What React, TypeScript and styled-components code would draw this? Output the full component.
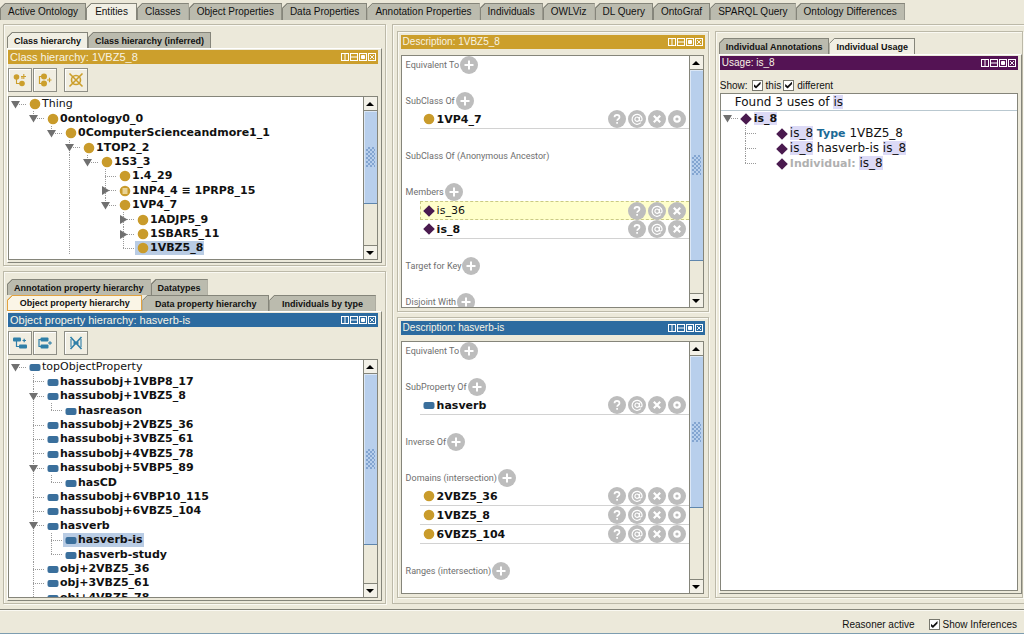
import React from "react";
import styled, { createGlobalStyle, css } from "styled-components";

const C = {
  bg: "#ece9da",
  tab: "#bbbbae",
  edge: "#85857a",
  etch: "#bcb9a8",
  gold: "#cc9f2c",
  blue: "#2c6ba0",
  purple: "#541354",
  thumb: "#b8cfec",
  select: "#b9cce4",
  mark: "#dcdaf6",
  guide: "#9a9a9a",
};

const GlobalStyle = createGlobalStyle`
  *, *::before, *::after { box-sizing: border-box; }
  body { margin: 0; background: ${C.bg}; color: #111; font-family: "Liberation Sans", Arial, sans-serif; font-size: 10px; }
  button, input { font: inherit; color: inherit; margin: 0; }
  button { padding: 0; cursor: pointer; }
  ul { list-style: none; margin: 0; padding: 0; }
  svg { display: block; flex: none; }
`;

const Page = styled.div`
  display: flex;
  flex-direction: column;
  height: 100vh;
  overflow: hidden;
`;

/* ---------- tabs ---------- */

const TabStrip = styled.div<{ $main?: boolean; $stretch?: boolean }>`
  display: flex;
  flex: none;
  padding-top: ${(p) => (p.$main ? 3 : 0)}px;
  ${(p) => p.$stretch && css`padding-right: 6px; > * { flex: 1 1 auto; }`}
`;

const Tab = styled.button<{ $active?: boolean; $focus?: boolean; $small?: boolean }>`
  height: ${(p) => (p.$small ? 16 : 17)}px;
  min-width: ${(p) => (p.$small ? 0 : 51)}px;
  padding: 0 ${(p) => (p.$small ? 6 : 7)}px;
  border: 1px solid ${(p) => (p.$focus ? "#e2a240" : C.edge)};
  border-bottom-width: ${(p) => (p.$focus ? 1 : 0)}px;
  clip-path: polygon(5px 0, 100% 0, 100% 100%, 0 100%, 0 5px);
  background: ${(p) => {
    const fill = p.$focus ? "#faf5e6" : p.$active ? "#f1efe4" : C.tab;
    return `linear-gradient(135deg, ${p.$focus ? "#e2a240" : C.edge} 3px, ${fill} 3px)`;
  }};
  font-size: ${(p) => (p.$small ? 9 : 10)}px;
  font-weight: ${(p) => (p.$small ? 700 : 400)};
  line-height: 14px;
  white-space: nowrap;
`;

/* ---------- frames ---------- */

const Workspace = styled.main`
  flex: 1;
  min-height: 0;
  display: grid;
  grid-template-columns: 383fr 633fr;
  gap: 6px;
  padding: 4px 0 5px 3px;
`;

const LeftColumn = styled.div`
  display: grid;
  grid-template-rows: 242fr 333fr;
  gap: 5px;
  min-height: 0;
  min-width: 0;
`;

const frame = css`
  border: 1px solid ${C.etch};
  box-shadow: inset 1px 1px 0 #faf9f2, 1px 1px 0 #faf9f2;
  min-height: 0;
  min-width: 0;
  display: flex;
  flex-direction: column;
`;

const LeftFrame = styled.section`
  ${frame}
  padding: 7px 3px 2px;
`;

const RightArea = styled.div`
  border: 1px solid ${C.etch};
  border-right: 0;
  box-shadow: inset 1px 1px 0 #faf9f2;
  min-height: 0;
  min-width: 0;
  display: grid;
  grid-template-columns: 312fr 308fr;
  gap: 6px;
  padding: 6px 1px 5px 4px;
`;

const MiddleColumn = styled.div`
  display: grid;
  grid-template-rows: 1fr 1fr;
  gap: 5px;
  min-height: 0;
  min-width: 0;
`;

const MiddleFrame = styled.section`
  ${frame}
  padding: 3px;
`;

const UsageFrame = styled.section`
  ${frame}
  padding: 6px 0 3px 3px;
`;

const TabBody = styled.div`
  flex: 1;
  min-height: 0;
  display: flex;
  flex-direction: column;
  padding: 1px 3px 2px 0;
  border: 1px solid;
  border-color: #fff ${C.edge} ${C.edge} #fff;
`;

/* ---------- title bar ---------- */

const TitleBar = styled.header<{ $color: string; $large?: boolean }>`
  flex: none;
  display: flex;
  align-items: center;
  justify-content: space-between;
  height: 14px;
  padding: 0 2px;
  background: ${(p) => p.$color};
  color: #f8f4e4;
  font-size: ${(p) => (p.$large ? 11 : 10)}px;
  line-height: 14px;
  white-space: nowrap;
`;

const WindowButtons = styled.span`
  display: flex;
  gap: 1px;
`;

const BareButton = styled.button`
  display: block;
  border: 0;
  background: none;
`;

const WINDOW_ICONS: [string, React.ReactNode][] = [
  ["Split vertically", <path key="a" d="M4 0v8" />],
  ["Split horizontally", <path key="a" d="M0 4h8" />],
  ["Float", <path key="a" d="M2.5 2.5h3v3h-3z" fill="#fff" />],
  ["Close", <path key="a" d="M2 2l4 4M6 2l-4 4" strokeWidth="0.9" />],
];

function Title({ color, text, large }: { color: string; text: string; large?: boolean }) {
  return (
    <TitleBar $color={color} $large={large}>
      <span>{text}</span>
      <WindowButtons>
        {WINDOW_ICONS.map(([label, shape]) => (
          <BareButton key={label} aria-label={label}>
            <svg width="8" height="8" viewBox="0 0 8 8" fill="none" stroke="#fff">
              <rect x="0.5" y="0.5" width="7" height="7" />
              {shape}
            </svg>
          </BareButton>
        ))}
      </WindowButtons>
    </TitleBar>
  );
}

/* ---------- toolbar ---------- */

const Toolbar = styled.div`
  flex: none;
  display: flex;
  gap: 1px;
  padding: 4px 0;
`;

const ToolButton = styled.button<{ $apart?: boolean }>`
  display: flex;
  align-items: center;
  justify-content: center;
  width: 24px;
  height: 24px;
  margin-left: ${(p) => (p.$apart ? 6 : 0)}px;
  border: 1px solid #8f8f86;
  background: #f1eee2;
  box-shadow: inset 1px 1px 0 #fff;
`;

const G = C.gold;
const B = "#2f7fa8";

const classTools = [
  <svg key="0" width="16" height="16" viewBox="0 0 16 16" fill={G}>
    <circle cx="4.500" cy="5" r="2.800" />
    <circle cx="10" cy="11.500" r="2.800" />
    <path d="M4.500 7v4.500h4M10 7V4.500M9 4.500h5M11.800 2v5" fill="none" stroke={G} strokeWidth="1.100" />
  </svg>,
  <svg key="1" width="16" height="16" viewBox="0 0 16 16" fill={G}>
    <circle cx="7" cy="4.500" r="3" />
    <circle cx="7" cy="11.500" r="3" />
    <path d="M5 4.500H2.500v7H5M10 8h4.500M12.500 5.800v4.400" fill="none" stroke={G} strokeWidth="1.200" />
  </svg>,
  <svg key="2" width="16" height="16" viewBox="0 0 16 16" fill="none" stroke={G} strokeWidth="1.600">
    <circle cx="8" cy="8" r="4.500" />
    <path d="M1.500 1.500l13 13M14.500 1.500l-13 13" />
  </svg>,
];

const propertyTools = [
  <svg key="0" width="16" height="16" viewBox="0 0 16 16" fill={B}>
    <rect x="1" y="2.500" width="8" height="4" rx="1" />
    <rect x="7" y="9.500" width="8" height="4" rx="1" />
    <path d="M4.500 6v5.500H7M10.500 5.500h3.500M12.200 3.800v3.500" fill="none" stroke={B} strokeWidth="1.200" />
  </svg>,
  <svg key="1" width="16" height="16" viewBox="0 0 16 16" fill={B}>
    <rect x="3.500" y="2.500" width="8" height="4" rx="1" />
    <rect x="3.500" y="9.500" width="8" height="4" rx="1" />
    <path d="M4 4.500H2v7h2M11 8h4M13 6.200v3.500" fill="none" stroke={B} strokeWidth="1.200" />
  </svg>,
  <svg key="2" width="16" height="16" viewBox="0 0 16 16" fill="none" stroke={B} strokeWidth="1.600">
    <path d="M2.500 2l11 12M13.500 2l-11 12" />
    <path d="M3 4v8M13 4v8" strokeWidth="1.100" />
    <path d="M5.500 8h5" strokeWidth="2.500" />
  </svg>,
];

function Tools({ icons, labels }: { icons: React.ReactNode[]; labels: string[] }) {
  return (
    <Toolbar>
      {icons.map((icon, i) => (
        <ToolButton key={labels[i]} aria-label={labels[i]} $apart={i === 2}>
          {icon}
        </ToolButton>
      ))}
    </Toolbar>
  );
}

/* ---------- scrolling box ---------- */

const Box = styled.div`
  flex: 1;
  min-height: 0;
  display: flex;
  border: 1px solid ${C.edge};
  background: #fff;
`;

const BoxContent = styled.div`
  flex: 1;
  min-width: 0;
  overflow: hidden;
`;

const Track = styled.div`
  flex: none;
  display: flex;
  flex-direction: column;
  width: 14px;
  border-left: 1px solid ${C.edge};
  background: ${C.bg};
`;

const ArrowButton = styled.button`
  display: flex;
  align-items: center;
  justify-content: center;
  flex: none;
  height: 14px;
  border: 0;
  background: #f3f1e8;
  &:first-child { border-bottom: 1px solid ${C.edge}; }
  &:last-child { border-top: 1px solid ${C.edge}; }
`;

const Thumb = styled.div<{ $share: number }>`
  flex: ${(p) => p.$share} 1 0;
  display: flex;
  align-items: center;
  justify-content: center;
  border-bottom: 1px solid #5f86ad;
  background: ${C.thumb};
  box-shadow: inset 1px 1px 0 #dbe7f6;
`;

const Spare = styled.div<{ $share: number }>`
  flex: ${(p) => p.$share} 1 0;
`;

const Grip = styled.span`
  width: 9px;
  height: 20px;
  background:
    conic-gradient(#6d94c6 25%, transparent 0) 0 0 / 4px 4px,
    conic-gradient(#6d94c6 25%, transparent 0) 2px 2px / 4px 4px;
  opacity: 0.7;
`;

function Scroll({ thumb, spare, children }: { thumb: number; spare: number; children: React.ReactNode }) {
  return (
    <Box>
      <BoxContent>{children}</BoxContent>
      <Track>
        <ArrowButton aria-label="Scroll up">
          <svg width="8" height="4" viewBox="0 0 8 4"><path d="M4 0l4 4H0z" /></svg>
        </ArrowButton>
        <Thumb $share={thumb}><Grip /></Thumb>
        <Spare $share={spare} />
        <ArrowButton aria-label="Scroll down">
          <svg width="8" height="4" viewBox="0 0 8 4"><path d="M0 0h8L4 4z" /></svg>
        </ArrowButton>
      </Track>
    </Box>
  );
}

/* ---------- entity icons ---------- */

type Kind = "class" | "defined" | "property" | "individual";

const IconSlot = styled.span`
  display: flex;
  justify-content: center;
  flex: none;
  width: 15px;
`;

function EntityIcon({ kind }: { kind: Kind }) {
  return (
    <IconSlot>
      <svg width="12" height="12" viewBox="0 0 12 12">
        {kind === "property" && <rect x="0.500" y="3" width="11" height="7" rx="2" fill="#3a6f9c" />}
        {kind === "individual" && <path d="M6 0.200L11.800 6 6 11.800 0.200 6z" fill="#4a1a4f" />}
        {(kind === "class" || kind === "defined") && <circle cx="6" cy="6" r="5.300" fill="#c99b2b" />}
        {kind === "defined" && <path d="M3.500 4h5M3.500 6h5M3.500 8h5" stroke="#f3e6b8" strokeWidth="1.300" />}
      </svg>
    </IconSlot>
  );
}

/* ---------- tree ---------- */

type Line = "none" | "through" | "tee" | "elbow" | "stub";

const TreeList = styled.ul`
  display: grid;
  grid-auto-rows: 14px 15px 14px 15px 14px;
  font-family: "DejaVu Sans", Verdana, sans-serif;
  font-size: 11px;
`;

const TreeRow = styled.li`
  display: flex;
  align-items: center;
  white-space: nowrap;
`;

const dotsDown = `repeating-linear-gradient(to bottom, ${C.guide} 0 1px, transparent 1px 2px)`;
const dotsAcross = `repeating-linear-gradient(to right, ${C.guide} 0 1px, transparent 1px 2px)`;

const Guide = styled.span<{ $line: Line }>`
  flex: none;
  display: flex;
  align-items: center;
  align-self: stretch;
  width: 18px;
  padding-left: 2px;
  background-repeat: no-repeat;
  background-position: 6px 0, 6px 7px;
  background-image: ${(p) => (p.$line === "none" ? "none" : `${dotsDown}, ${dotsAcross}`)};
  background-size: ${(p) =>
    ({
      none: "0 0, 0 0",
      through: "1px 100%, 0 0",
      tee: "1px 100%, 12px 1px",
      elbow: "1px 8px, 12px 1px",
      stub: "0 0, 12px 1px",
    })[p.$line]};
`;

const NodeLabel = styled.span<{ $bold: boolean; $selected?: boolean }>`
  display: flex;
  align-items: center;
  align-self: stretch;
  padding-right: 1px;
  font-weight: ${(p) => (p.$bold ? 700 : 400)};
  line-height: 14px;
  background: ${(p) => (p.$selected ? C.select : "transparent")};
`;

function Toggle({ open }: { open: boolean }) {
  return (
    <BareButton aria-label={open ? "Collapse" : "Expand"}>
      <svg width="9" height="9" viewBox="0 0 9 9" fill="#707070">
        <path d={open ? "M0 1h9L4.500 8.500z" : "M1 0l7.500 4.500L1 9z"} />
      </svg>
    </BareButton>
  );
}

interface Node {
  name: string;
  lines: string; // one letter per indent column: . none, | through, + tee, L elbow, - stub
  open?: boolean;
  kind?: Kind;
  plain?: boolean;
  selected?: boolean;
}

const LINE: Record<string, Line> = { ".": "none", "|": "through", "+": "tee", L: "elbow", "-": "stub" };

function Tree({ nodes, kind, label }: { nodes: Node[]; kind: Kind; label: string }) {
  return (
    <TreeList role="tree" aria-label={label}>
      {nodes.map((n) => (
        <TreeRow key={n.name} role="treeitem" aria-selected={!!n.selected}>
          {n.lines.split("").map((ch, i) => (
            <Guide key={i} $line={LINE[ch]}>
              {i === n.lines.length - 1 && n.open !== undefined && <Toggle open={n.open} />}
            </Guide>
          ))}
          <NodeLabel $bold={!n.plain} $selected={n.selected}>
            <EntityIcon kind={n.kind ?? kind} />
            {n.name}
          </NodeLabel>
        </TreeRow>
      ))}
    </TreeList>
  );
}

const classNodes: Node[] = [
  { name: "Thing", lines: "-", open: true, plain: true },
  { name: "0ontology0_0", lines: ".L", open: true },
  { name: "0ComputerScienceandmore1_1", lines: "..L", open: true },
  { name: "1TOP2_2", lines: "...+", open: true },
  { name: "1S3_3", lines: "...|L", open: true },
  { name: "1.4_29", lines: "...|.+" },
  { name: "1NP4_4 ≡ 1PRP8_15", lines: "...|.+", open: false, kind: "defined" },
  { name: "1VP4_7", lines: "...|.L", open: true },
  { name: "1ADJP5_9", lines: "...|..+", open: false },
  { name: "1SBAR5_11", lines: "...|..+", open: false },
  { name: "1VBZ5_8", lines: "...|..L", selected: true },
];

const propertyNodes: Node[] = [
  { name: "topObjectProperty", lines: "-", open: true, plain: true },
  { name: "hassubobj+1VBP8_17", lines: ".+" },
  { name: "hassubobj+1VBZ5_8", lines: ".+", open: true },
  { name: "hasreason", lines: ".|L" },
  { name: "hassubobj+2VBZ5_36", lines: ".+" },
  { name: "hassubobj+3VBZ5_61", lines: ".+" },
  { name: "hassubobj+4VBZ5_78", lines: ".+" },
  { name: "hassubobj+5VBP5_89", lines: ".+", open: true },
  { name: "hasCD", lines: ".|L" },
  { name: "hassubobj+6VBP10_115", lines: ".+" },
  { name: "hassubobj+6VBZ5_104", lines: ".+" },
  { name: "hasverb", lines: ".+", open: true },
  { name: "hasverb-is", lines: ".|+", selected: true },
  { name: "hasverb-study", lines: ".|L" },
  { name: "obj+2VBZ5_36", lines: ".+" },
  { name: "obj+3VBZ5_61", lines: ".+" },
  { name: "obj+4VBZ5_78", lines: ".+" },
];

/* ---------- description panels ---------- */

const Sections = styled.div`
  display: flex;
  flex-direction: column;
  gap: 18px;
`;

const SectionHead = styled.h3`
  display: flex;
  align-items: center;
  gap: 1px;
  height: 18px;
  margin: 0;
  padding-left: 4px;
  color: #6e6e6e;
  font-family: Roboto, "Liberation Sans", sans-serif;
  font-size: 9px;
  font-weight: 400;
  line-height: 18px;
  white-space: nowrap;
`;

const Item = styled.li<{ $inferred?: boolean }>`
  display: flex;
  align-items: center;
  justify-content: space-between;
  height: 19px;
  margin-left: 18px;
  padding-right: 3px;
  padding-left: ${(p) => (p.$inferred ? 1 : 2)}px;
  border: 0 solid #d2d2d2;
  border-bottom-width: 1px;
  font-family: "DejaVu Sans", Verdana, sans-serif;
  font-size: 11px;
  font-weight: 700;
  ${(p) =>
    p.$inferred &&
    css`
      border: 1px dashed #c9c985;
      border-right: 0;
      background: #ffffcb;
      font-weight: 400;
    `}
`;

const ItemName = styled.span`
  display: flex;
  align-items: center;
`;

const Actions = styled.span`
  display: flex;
  gap: 2px;
`;

const actionShapes: Record<string, React.ReactNode> = {
  Add: <path d="M9 4.500v9M4.500 9h9" strokeWidth="2" />,
  Explain: (
    <path d="M6.500 7.300c0-3.200 5-3.200 5 0 0 1.700-2.400 1.700-2.400 3.500M9.100 12v1.800" strokeWidth="1.700" />
  ),
  Annotate: (
    <path
      d="M12.800 12.700a5 5 0 1 1 1.300-3.700c0 2.600-2.900 2.600-2.700.3l.3-2.500M11.300 9a2.200 2.200 0 1 1-4.300-.4 2.200 2.200 0 0 1 4.300.4"
      strokeWidth="1.200"
    />
  ),
  Remove: <path d="M5.800 5.800l6.400 6.400M12.200 5.800l-6.400 6.400" strokeWidth="2.200" />,
  Edit: <circle cx="9" cy="9" r="2.700" strokeWidth="2.200" />,
};

function RoundButton({ action }: { action: string }) {
  return (
    <BareButton aria-label={action}>
      <svg width="18" height="18" viewBox="0 0 18 18" fill="none" stroke="#fff">
        <circle cx="9" cy="9" r="9" fill="#bdbdbd" stroke="none" />
        {actionShapes[action]}
      </svg>
    </BareButton>
  );
}

interface Section {
  head: string;
  fixed?: boolean;
  items?: { name: string; kind: Kind; inferred?: boolean }[];
}

const classSections: Section[] = [
  { head: "Equivalent To" },
  { head: "SubClass Of", items: [{ name: "1VP4_7", kind: "class" }] },
  { head: "SubClass Of (Anonymous Ancestor)", fixed: true },
  {
    head: "Members",
    items: [
      { name: "is_36", kind: "individual", inferred: true },
      { name: "is_8", kind: "individual" },
    ],
  },
  { head: "Target for Key" },
  { head: "Disjoint With" },
];

const propertySections: Section[] = [
  { head: "Equivalent To" },
  { head: "SubProperty Of", items: [{ name: "hasverb", kind: "property" }] },
  { head: "Inverse Of" },
  {
    head: "Domains (intersection)",
    items: [
      { name: "2VBZ5_36", kind: "class" },
      { name: "1VBZ5_8", kind: "class" },
      { name: "6VBZ5_104", kind: "class" },
    ],
  },
  { head: "Ranges (intersection)" },
];

const DescriptionBody = styled.div`
  flex: 1;
  min-height: 0;
  display: flex;
  padding: 6px 1px 0 0;
`;

function Description(props: { title: string; color: string; sections: Section[]; thumb: number; spare: number }) {
  return (
    <MiddleFrame>
      <Title color={props.color} text={props.title} />
      <DescriptionBody>
        <Scroll thumb={props.thumb} spare={props.spare}>
          <Sections>
            {props.sections.map((s) => (
              <section key={s.head}>
                <SectionHead>
                  {s.head}
                  {!s.fixed && <RoundButton action="Add" />}
                </SectionHead>
                {s.items && (
                  <ul>
                    {s.items.map((it) => (
                      <Item key={it.name} $inferred={it.inferred}>
                        <ItemName>
                          <EntityIcon kind={it.kind} />
                          {it.name}
                        </ItemName>
                        <Actions>
                          <RoundButton action="Explain" />
                          <RoundButton action="Annotate" />
                          <RoundButton action="Remove" />
                          {it.kind !== "individual" && <RoundButton action="Edit" />}
                        </Actions>
                      </Item>
                    ))}
                  </ul>
                )}
              </section>
            ))}
          </Sections>
        </Scroll>
      </DescriptionBody>
    </MiddleFrame>
  );
}

/* ---------- usage panel ---------- */

const CheckLabel = styled.label`
  display: flex;
  align-items: center;
  gap: 3px;
  white-space: nowrap;
`;

const Check = styled.input.attrs({ type: "checkbox" })`
  appearance: none;
  flex: none;
  display: grid;
  place-items: center;
  width: 11px;
  height: 11px;
  border: 1px solid #77776d;
  background: #fff;
  &:checked::after {
    content: "";
    width: 7px;
    height: 7px;
    background: #111;
    clip-path: polygon(0 35%, 35% 65%, 100% 0, 100% 35%, 35% 100%, 0 70%);
  }
`;

const ShowRow = styled.div`
  flex: none;
  display: flex;
  align-items: center;
  gap: 2px;
  height: 23px;
  padding-top: 7px;
`;

const ShowText = styled.span`
  margin-right: 2px;
`;

const UsageBox = styled.div`
  flex: 1;
  min-height: 0;
  border: 1px solid ${C.edge};
  background: #fff;
  font-family: "DejaVu Sans", Verdana, sans-serif;
  font-size: 12px;
  overflow: hidden;
`;

const Found = styled.p`
  margin: 0;
  padding-left: 14px;
  border-bottom: 1px solid #b9c8d0;
  line-height: 16px;
`;

const Mark = styled.mark`
  background: ${C.mark};
  color: inherit;
`;

const UsageList = styled.ul`
  display: grid;
  grid-auto-rows: 15px;
`;

const UsageRow = styled.li`
  display: flex;
  align-items: center;
  white-space: nowrap;
`;

const UsageGap = styled.span`
  flex: none;
  width: 18px;
`;

const UsageText = styled.span<{ $bold?: boolean }>`
  font-weight: ${(p) => (p.$bold ? 700 : 400)};
  font-size: ${(p) => (p.$bold ? 11 : 12)}px;
  line-height: 15px;
`;

const Keyword = styled.b<{ $color: string }>`
  color: ${(p) => p.$color};
  font-size: 11px;
`;

const usages: React.ReactNode[] = [
  <>
    <Mark>is_8</Mark> <Keyword $color="#1b6a96">Type</Keyword> 1VBZ5_8
  </>,
  <>
    <Mark>is_8</Mark> hasverb-is <Mark>is_8</Mark>
  </>,
  <>
    <Keyword $color="#b0b0b0">Individual:</Keyword> <Mark>is_8</Mark>
  </>,
];

/* ---------- status bar ---------- */

const StatusBar = styled.footer`
  flex: none;
  display: flex;
  align-items: center;
  justify-content: flex-end;
  gap: 14px;
  height: 25px;
  padding: 6px 7px 0 0;
  border-top: 1px solid ${C.edge};
  border-bottom: 1px solid #7d9db0;
  box-shadow: inset 0 1px 0 #faf9f2;
`;

const MAIN_TABS = [
  "Active Ontology",
  "Entities",
  "Classes",
  "Object Properties",
  "Data Properties",
  "Annotation Properties",
  "Individuals",
  "OWLViz",
  "DL Query",
  "OntoGraf",
  "SPARQL Query",
  "Ontology Differences",
];

function SmallTabs({ names, active, focus, stretch }: { names: string[]; active?: string; focus?: boolean; stretch?: boolean }) {
  return (
    <TabStrip role="tablist" $stretch={stretch}>
      {names.map((n) => (
        <Tab key={n} role="tab" aria-selected={n === active} $small $active={n === active} $focus={focus && n === active}>
          {n}
        </Tab>
      ))}
    </TabStrip>
  );
}

export default function App() {
  return (
    <Page>
      <GlobalStyle />
      <TabStrip role="tablist" $main>
        {MAIN_TABS.map((n) => (
          <Tab key={n} role="tab" aria-selected={n === "Entities"} $active={n === "Entities"}>
            {n}
          </Tab>
        ))}
      </TabStrip>

      <Workspace>
        <LeftColumn>
          <LeftFrame>
            <SmallTabs names={["Class hierarchy", "Class hierarchy (inferred)"]} active="Class hierarchy" />
            <TabBody>
              <Title color={C.gold} text="Class hierarchy: 1VBZ5_8" large />
              <Tools icons={classTools} labels={["Add subclass", "Add sibling class", "Delete class"]} />
              <Scroll thumb={93} spare={41}>
                <Tree nodes={classNodes} kind="class" label="Class hierarchy" />
              </Scroll>
            </TabBody>
          </LeftFrame>
          <LeftFrame>
            <SmallTabs names={["Annotation property hierarchy", "Datatypes"]} />
            <SmallTabs
              names={["Object property hierarchy", "Data property hierarchy", "Individuals by type"]}
              active="Object property hierarchy"
              focus
              stretch
            />
            <TabBody>
              <Title color={C.blue} text="Object property hierarchy: hasverb-is" large />
              <Tools icons={propertyTools} labels={["Add sub property", "Add sibling property", "Delete property"]} />
              <Scroll thumb={168} spare={38}>
                <Tree nodes={propertyNodes} kind="property" label="Object property hierarchy" />
              </Scroll>
            </TabBody>
          </LeftFrame>
        </LeftColumn>

        <RightArea>
          <MiddleColumn>
            <Description title="Description: 1VBZ5_8" color={C.gold} sections={classSections} thumb={190} spare={32} />
            <Description title="Description: hasverb-is" color={C.blue} sections={propertySections} thumb={151} spare={71} />
          </MiddleColumn>

          <UsageFrame>
            <SmallTabs names={["Individual Annotations", "Individual Usage"]} active="Individual Usage" />
            <TabBody>
              <Title color={C.purple} text="Usage: is_8" />
              <ShowRow>
                <ShowText>Show:</ShowText>
                <CheckLabel>
                  <Check defaultChecked />
                  this
                </CheckLabel>
                <CheckLabel>
                  <Check defaultChecked />
                  different
                </CheckLabel>
              </ShowRow>
              <UsageBox>
                <Found>
                  Found 3 uses of <Mark>is</Mark>
                </Found>
                <UsageList>
                  <UsageRow>
                    <Guide $line="stub">
                      <Toggle open />
                    </Guide>
                    <EntityIcon kind="individual" />
                    <UsageText $bold>
                      <Mark>is_8</Mark>
                    </UsageText>
                  </UsageRow>
                  {usages.map((u, i) => (
                    <UsageRow key={i}>
                      <Guide $line="none" />
                      <Guide $line={i === usages.length - 1 ? "elbow" : "tee"} />
                      <UsageGap />
                      <EntityIcon kind="individual" />
                      <UsageText>{u}</UsageText>
                    </UsageRow>
                  ))}
                </UsageList>
              </UsageBox>
            </TabBody>
          </UsageFrame>
        </RightArea>
      </Workspace>

      <StatusBar>
        <span>Reasoner active</span>
        <CheckLabel>
          <Check defaultChecked />
          Show Inferences
        </CheckLabel>
      </StatusBar>
    </Page>
  );
}
